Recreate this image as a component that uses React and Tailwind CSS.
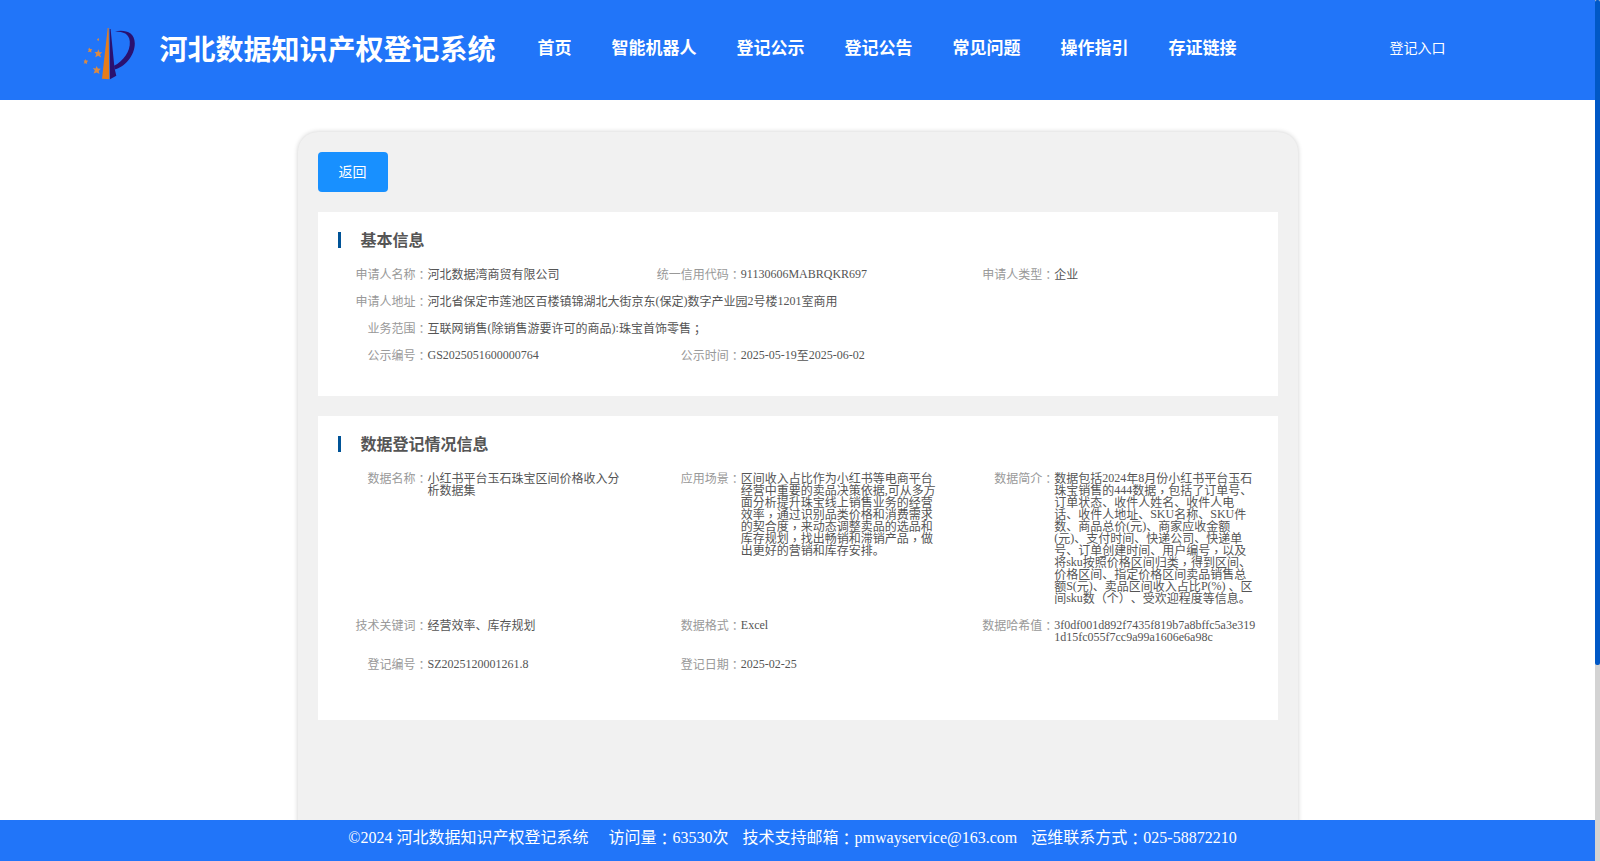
import React from "react";

const navItems = [
  "首页",
  "智能机器人",
  "登记公示",
  "登记公告",
  "常见问题",
  "操作指引",
  "存证链接",
];

const basicInfo = [
  { label: "申请人名称", value: "河北数据湾商贸有限公司" },
  { label: "统一信用代码", value: "91130606MABRQKR697" },
  { label: "申请人类型", value: "企业" },
  {
    label: "申请人地址",
    value: "河北省保定市莲池区百楼镇锦湖北大街京东(保定)数字产业园2号楼1201室商用",
    full: true,
  },
  { label: "业务范围", value: "互联网销售(除销售游要许可的商品):珠宝首饰零售；", full: true },
  { label: "公示编号", value: "GS2025051600000764" },
  { label: "公示时间", value: "2025-05-19至2025-06-02" },
];

const dataInfo = [
  { label: "数据名称", value: "小红书平台玉石珠宝区间价格收入分\n析数据集" },
  {
    label: "应用场景",
    value:
      "区间收入占比作为小红书等电商平台\n经营中重要的卖品决策依据,可从多方\n面分析提升珠宝线上销售业务的经营\n效率，通过识别品类价格和消费需求\n的契合度，来动态调整卖品的选品和\n库存规划，找出畅销和滞销产品，做\n出更好的营销和库存安排。",
  },
  {
    label: "数据简介",
    value:
      "数据包括2024年8月份小红书平台玉石\n珠宝销售的444数据，包括了订单号、\n订单状态、收件人姓名、收件人电\n话、收件人地址、SKU名称、SKU件\n数、商品总价(元)、商家应收金额\n(元)、支付时间、快递公司、快递单\n号、订单创建时间、用户编号，以及\n将sku按照价格区间归类，得到区间、\n价格区间、指定价格区间卖品销售总\n额S(元)、卖品区间收入占比P(%) 、区\n间sku数（个）、受欢迎程度等信息。",
  },
  { label: "技术关键词", value: "经营效率、库存规划" },
  { label: "数据格式", value: "Excel" },
  {
    label: "数据哈希值",
    value: "3f0df001d892f7435f819b7a8bffc5a3e319\n1d15fc055f7cc9a99a1606e6a98c",
  },
  { label: "登记编号", value: "SZ2025120001261.8" },
  { label: "登记日期", value: "2025-02-25" },
];

// Full-width commas, colons and semicolons sit in the middle of their cell
const Mark = ({ children }) => (
  <span className="align-[-2px] font-['Noto_Sans_CJK_TC',sans-serif] leading-[0]">{children}</span>
);

// Chinese runs sit slightly below the latin baseline
const Text = ({ children }) =>
  children.split(/([，：；]|[^\x00-\xff，：；]+)/).map((part, i) => {
    if (i % 2 === 0) return part;
    if (part === "，") {
      return (
        <span key={i} className="align-[-3px] font-['Noto_Sans_CJK_TC',sans-serif] leading-[0]">
          {part}
        </span>
      );
    }
    return /[：；]/.test(part) ? (
      <Mark key={i}>{part}</Mark>
    ) : (
      <span key={i} className="align-[-1px] leading-[0]">
        {part}
      </span>
    );
  });

const Logo = () => (
  <svg className="block h-[60px] w-[60px]" viewBox="0 0 60 60">
    <path d="M27.700 8 L22 58.800 L29.300 59.200 L28.600 8 Z" fill="#e67d1c" />
    <path d="M29.700 9 L30.600 9 L34.500 48 L36.300 55.800 L30 59.200 Z" fill="#2a1170" />
    <path
      d="M35 11.400 C44 9.300 54.800 11.500 54.800 23.500 C54.800 36 44.500 47 34.500 49.500 L34 45.800 C43 41.500 50.500 31.500 49.800 21.500 C49.200 13.500 43.500 11.500 35 11.400 Z"
      fill="#2a1170"
    />
    <g fill="#d98a45">
      <path d="M18.300 29.300 L19.500 32.200 L22.300 32.200 L20.100 34.400 L21.200 37.500 L18.100 35.700 L15.300 37.300 L16.200 34.100 L14.500 32 L17.300 32 Z" />
      <path d="M16.500 46 L17.900 48.600 L20.800 48.800 L18.700 51 L19.500 54 L16.700 52.500 L13.600 53.600 L14.800 50.600 L12.800 48 L15.600 48.500 Z" />
      <path d="M9.300 27.500 L10.400 29 L12.400 29.200 L11.100 30.800 L11.500 32.600 L9.800 31.700 L7.800 32 L8.800 30.300 L7.800 28.500 L9.100 28.900 Z" />
      <path d="M5.400 39 L6.400 40.600 L8.200 40.800 L6.900 42.300 L7 44 L5.400 43.300 L3.700 43.500 L4.500 42 L3.600 40.400 L5 40.600 Z" />
      <path d="M18.500 18 L19 19.200 L18.700 21 L17.300 20.200 L17.200 19.200 Z" />
    </g>
  </svg>
);

const Section = ({ title, items, className }) => (
  <div className={`bg-white px-[10px] pt-5 ${className}`}>
    <div className="mb-5 ml-[10px] flex h-4 items-center border-l-[3px] border-[#005397] pl-5">
      <h2 className="pt-[2px] text-base leading-4 font-bold text-[#555]">{title}</h2>
    </div>
    <div className="grid grid-cols-3 gap-y-[15px] text-xs leading-3">
      {items.map(({ label, value, full }) => (
        <div key={label} className={full ? "col-span-3 flex" : "flex"}>
          <div className="w-[100px] shrink-0 text-right text-[#999]">
            <Text>{`${label}：`}</Text>
          </div>
          <div className="whitespace-pre text-[#555]">
            <Text>{value}</Text>
          </div>
        </div>
      ))}
    </div>
  </div>
);

const App = () => {
  return (
    <div className="flex h-[861px] overflow-hidden bg-white font-['Liberation_Serif','Noto_Sans_CJK_SC',serif] [text-spacing-trim:space-all]">
      <div className="flex min-w-0 flex-1 flex-col">
        {/* Header */}
        <header className="flex h-[100px] shrink-0 items-center bg-[#2175f9] pl-20 text-white">
          <Logo />
          <h1 className="ml-[19.500px] pt-[2px] text-[28px] leading-none font-bold whitespace-nowrap">
            河北数据知识产权登记系统
          </h1>
          <nav className="ml-[42px] flex gap-10 pb-1 text-[17px] leading-none font-bold whitespace-nowrap">
            {navItems.map((item) => (
              <a key={item}>{item}</a>
            ))}
          </nav>
          <a className="mr-[149.500px] ml-auto pb-[2px] text-sm leading-none">登记入口</a>
        </header>

        {/* Content */}
        <main className="min-h-0 flex-1 overflow-hidden pt-[31.500px]">
          <div className="mx-auto h-[900px] w-[1000px] rounded-[20px] bg-[#f1f1f1] p-5 shadow-[0_0_5px_rgba(0,0,0,0.2)]">
            <button className="block h-10 w-[70px] rounded bg-[#1890ff] pt-[2px] text-sm leading-none text-white">
              返回
            </button>
            <Section title="基本信息" items={basicInfo} className="mt-5 h-[184px]" />
            <Section title="数据登记情况信息" items={dataInfo} className="mt-5 h-[304px]" />
          </div>
        </main>

        {/* Footer */}
        <footer className="flex h-[41px] shrink-0 justify-center bg-[#2175f9] pt-[10px] pr-[10px] text-base leading-4 whitespace-nowrap text-white">
          <span>©2024 河北数据知识产权登记系统</span>
          <span className="ml-5">
            访问量
            <Mark>：</Mark>
            63530次
          </span>
          <span className="ml-[14px]">
            技术支持邮箱
            <Mark>：</Mark>
            pmwayservice@163.com
          </span>
          <span className="ml-[14px]">
            运维联系方式
            <Mark>：</Mark>
            025-58872210
          </span>
        </footer>
      </div>

      {/* Scrollbar */}
      <div className="w-[5px] shrink-0 bg-[#d3d3d3]">
        <div className="h-[665px] rounded-[2px] bg-[#0058c6]" />
      </div>
    </div>
  );
};

export default App;
